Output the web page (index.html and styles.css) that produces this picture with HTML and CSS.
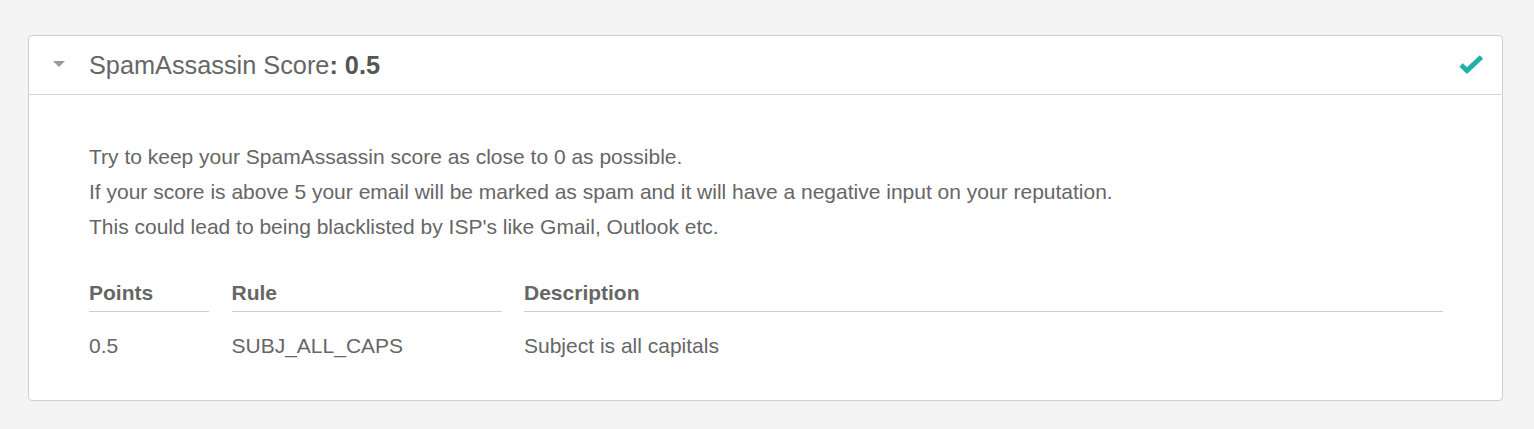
FILE: index.html
```html
<!DOCTYPE html>
<html>
<head>
<meta charset="utf-8">
<link rel="stylesheet" href="styles.css">
</head>
<body>
<div class="card">
  <div class="card-header">
    <span class="caret"></span>
    <h2 class="title">SpamAssassin Score<b>: 0.5</b></h2>
    <svg class="check" width="26" height="20" viewBox="0 0 26 20"><path d="M3 11 L9 16.5 L23.5 3" fill="none" stroke="#20b2aa" stroke-width="5" stroke-linejoin="miter"/></svg>
  </div>
  <div class="card-body">
    <p>Try to keep your SpamAssassin score as close to 0 as possible.</p>
    <p>If your score is above 5 your email will be marked as spam and it will have a negative input on your reputation.</p>
    <p>This could lead to being blacklisted by ISP's like Gmail, Outlook etc.</p>
    <div class="table">
      <div class="th">Points</div>
      <div class="th">Rule</div>
      <div class="th">Description</div>
      <div class="td">0.5</div>
      <div class="td">SUBJ_ALL_CAPS</div>
      <div class="td">Subject is all capitals</div>
    </div>
  </div>
</div>
</body>
</html>
```
FILE: styles.css
```css
html, body { margin: 0; padding: 0; }
body {
  background: #f4f4f4;
  font-family: "Liberation Sans", Arial, sans-serif;
  color: #666;
  padding: 35px 31px 28px 28px;
}
.card {
  background: #fff;
  border: 1px solid #cfcfcf;
  border-radius: 4px;
}
.card-header {
  display: flex;
  align-items: center;
  height: 58px;
  border-bottom: 1px solid #d4d4d4;
  padding: 0 18px 0 24px;
}
.caret {
  width: 0; height: 0;
  border-left: 6px solid transparent;
  border-right: 6px solid transparent;
  border-top: 6px solid #999;
  margin-right: 24px;
  margin-top: -3px;
}
.title {
  flex: 1;
  margin: 0;
  font-size: 25.3px;
  font-weight: normal;
  color: #666;
}
.title b { font-weight: bold; color: #555; }
.check { display: block; margin-top: -3px; }
.card-body {
  padding: 44px 59px 42px 60px;
}
.card-body p {
  margin: 0;
  font-size: 21px;
  line-height: 35px;
}
.table {
  display: grid;
  grid-template-columns: 120px 270px 1fr;
  column-gap: 22.5px;
  margin-top: 37px;
  font-size: 21px;
}
.th {
  font-weight: bold;
  padding-bottom: 6px;
  border-bottom: 1px solid #cfcfcf;
  line-height: 24px;
}
.td {
  padding-top: 22px;
  line-height: 24px;
}
```
